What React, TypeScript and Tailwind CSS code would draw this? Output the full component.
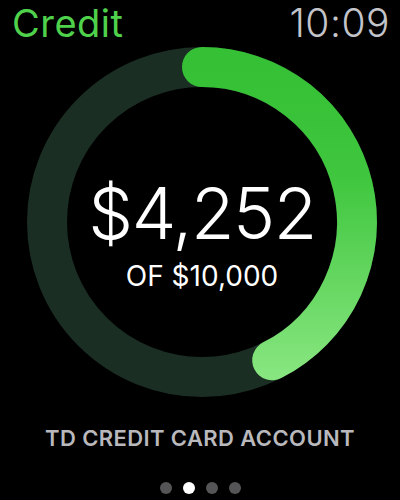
import React from "react";

const R = 155;

export default function App() {
  const used = 4252;
  const limit = 10000;
  const angle = (used / limit) * 2 * Math.PI;
  const endX = 180 + R * Math.sin(angle);
  const endY = 180 - R * Math.cos(angle);

  return (
    <div className="w-[400px] h-[500px] bg-black overflow-hidden flex flex-col font-['Inter',sans-serif]">
      <div className="flex justify-between items-start pl-3 pr-[10px] pt-[3px] h-[42px]">
        <span className="text-[38px] leading-[40px] text-[#4fd14c] tracking-[0.5px]">Credit</span>
        <span className="text-[39px] leading-[40px] text-[#c3c3ca] font-light tracking-[0.5px]">10:09</span>
      </div>

      <div className="relative w-[360px] h-[360px] ml-[22px]">
        <svg width="360" height="360" viewBox="0 0 360 360">
          <defs>
            <linearGradient id="arc" gradientUnits="userSpaceOnUse" x1="0" y1="25" x2="0" y2="335">
              <stop offset="0%" stopColor="#35c035" />
              <stop offset="35%" stopColor="#3fc63e" />
              <stop offset="100%" stopColor="#88e680" />
            </linearGradient>
          </defs>
          <circle cx="180" cy="180" r={R} fill="none" stroke="#1b2e23" strokeWidth="40" />
          <path
            d={`M 180 ${180 - R} A ${R} ${R} 0 0 1 ${endX} ${endY}`}
            fill="none"
            stroke="url(#arc)"
            strokeWidth="40"
            strokeLinecap="round"
          />
        </svg>
        <div className="absolute inset-0 flex flex-col items-center justify-center pt-[22px]">
          <span className="text-[71px] leading-[80px] font-light text-white tracking-[-1.5px]">$4,252</span>
          <span className="text-[28px] leading-[34px] text-white mt-[6px]">OF $10,000</span>
        </div>
      </div>

      <div className="mt-[23px] text-center text-[22px] leading-[26px] font-semibold text-[#b9b9bd] tracking-[0.4px]">
        TD CREDIT CARD ACCOUNT
      </div>

      <div className="flex justify-center gap-[11px] mt-[31px]">
        <span className="w-[12px] h-[12px] rounded-full bg-[#555557]" />
        <span className="w-[12px] h-[12px] rounded-full bg-white" />
        <span className="w-[12px] h-[12px] rounded-full bg-[#555557]" />
        <span className="w-[12px] h-[12px] rounded-full bg-[#555557]" />
      </div>
    </div>
  );
}
